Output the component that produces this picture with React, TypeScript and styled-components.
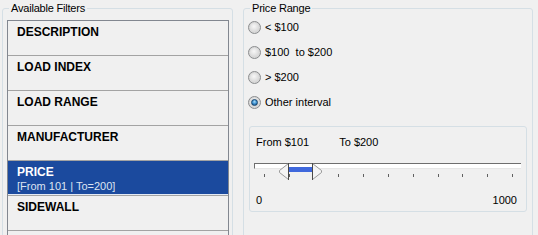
import React from 'react';
import styled, { createGlobalStyle } from 'styled-components';

const GlobalStyle = createGlobalStyle`
  html, body { margin: 0; padding: 0; background: #f0f0f0; overflow: hidden; }
  body { font-family: "Liberation Sans", Arial, sans-serif; font-size: 11px; color: #000; }
`;

const Window = styled.div`
  display: flex;
  align-items: flex-start;
  gap: 10px;
  padding: 2px 0 0 2px;
  width: 538px;
  height: 235px;
  box-sizing: border-box;
  overflow: hidden;
`;

const GroupBox = styled.fieldset<{ $width: number; $padRight: number }>`
  margin: 0;
  padding: 0 ${(p) => p.$padRight}px 0 4px;
  width: ${(p) => p.$width}px;
  min-width: 0;
  height: 280px;
  box-sizing: border-box;
  border: 1px solid #d5dfe5;
  border-radius: 3px;
  flex: none;
`;

const Legend = styled.legend`
  margin-left: 2px;
  padding: 0 2px;
  font-size: 11px;
  line-height: 13px;
  letter-spacing: -0.2px;
`;

const ListBox = styled.div`
  margin-top: 5px;
  border: 1px solid #828790;
  background: #f0f0f0;
  height: 260px;
`;

const Item = styled.div<{ $selected?: boolean }>`
  height: 35px;
  box-sizing: border-box;
  padding: 4px 0 0 9px;
  border-bottom: 1px solid #a3a3a3;
  background: ${(p) => (p.$selected ? '#1b4a9e' : 'transparent')};
  color: ${(p) => (p.$selected ? '#ffffff' : '#000000')};
  box-shadow: ${(p) => (p.$selected ? 'inset 0 -1px 0 #e4eaf4' : 'none')};
`;

const ItemTitle = styled.div`
  font-weight: bold;
  font-size: 12px;
  line-height: 14px;
`;

const ItemSub = styled.div`
  font-size: 11px;
  line-height: 13px;
  margin-top: 1px;
  color: #dbe3f1;
`;

const RadioRow = styled.label`
  display: flex;
  align-items: center;
  gap: 4px;
  height: 25px;
  line-height: 13px;
  white-space: pre;
`;

const RadioCircle = styled.span<{ $checked: boolean }>`
  width: 13px;
  height: 13px;
  box-sizing: border-box;
  border-radius: 50%;
  border: 1px solid #8a8c8e;
  background: radial-gradient(circle at 45% 40%, #f7f7f7 0%, #e0e0e0 45%, #c4c4c4 100%);
  box-shadow: inset 0 0 0 1px #d9d9d9;
  display: flex;
  align-items: center;
  justify-content: center;
  flex: none;
  &::after {
    content: '';
    display: ${(p) => (p.$checked ? 'block' : 'none')};
    width: 7px;
    height: 7px;
    box-sizing: border-box;
    border-radius: 50%;
    border: 1px solid #17466f;
    background: radial-gradient(circle at 50% 35%, #a8dcf8 0%, #3b8fcf 50%, #0f3f6e 100%);
  }
`;

const SliderPanel = styled.div`
  margin: 11px 1px 0 1px;
  border: 1px solid #d5dfe5;
  border-radius: 3px;
  padding: 9px 5px 4px 4px;
`;

const ValueRow = styled.div`
  display: flex;
  gap: 30px;
  padding-left: 2px;
  line-height: 13px;
`;

const Slider = styled.div`
  position: relative;
  margin-top: 14px;
  height: 17px;
`;

const Track = styled.div`
  margin-top: 4px;
  height: 4px;
  border-top: 1px solid #6e6e6e;
  border-left: 1px solid #6e6e6e;
  border-bottom: 1px solid #e6e6e6;
  background: #ffffff;
  box-sizing: content-box;
`;

const RangeFill = styled.div`
  position: absolute;
  top: 4px;
  height: 5px;
  background: #3f68dc;
`;

const Ticks = styled.div`
  display: flex;
  justify-content: space-between;
  padding: 0 8px 0 10px;
  margin-top: 5px;
`;

const Tick = styled.span`
  width: 1px;
  height: 3px;
  background: #5f5f5f;
`;

const Thumb = styled.svg`
  position: absolute;
  top: 0;
  width: 10px;
  height: 17px;
  overflow: visible;
`;

const ScaleRow = styled.div`
  display: flex;
  justify-content: space-between;
  margin-top: 14px;
  padding: 0 4px 0 2px;
  line-height: 13px;
`;

const filters = [
  { name: 'DESCRIPTION' },
  { name: 'LOAD INDEX' },
  { name: 'LOAD RANGE' },
  { name: 'MANUFACTURER' },
  { name: 'PRICE', sub: '[From 101 | To=200]', selected: true },
  { name: 'SIDEWALL' },
];

const options = ['< $100', '$100  to $200', '> $200', 'Other interval'];

const MIN = 0;
const MAX = 1000;
const FROM = 101;
const TO = 200;
const pos = (v: number) => 10 + ((v - MIN) / (MAX - MIN)) * 248;

function LeftThumb({ left }: { left: number }) {
  return (
    <Thumb viewBox="0 0 10 17" style={{ left }}>
      <polygon points="9.5,0.5 0.5,7.5 0.5,9.5 9.5,16.5" fill="#f4f4f4" stroke="#9a9a9a" strokeWidth="1" />
      <line x1="9.5" y1="0" x2="9.5" y2="17" stroke="#4a4a4a" strokeWidth="1" />
    </Thumb>
  );
}

function RightThumb({ left }: { left: number }) {
  return (
    <Thumb viewBox="0 0 10 17" style={{ left }}>
      <polygon points="0.5,0.5 9.5,7.5 9.5,9.5 0.5,16.5" fill="#f4f4f4" stroke="#9a9a9a" strokeWidth="1" />
      <line x1="0.5" y1="0" x2="0.5" y2="17" stroke="#4a4a4a" strokeWidth="1" />
    </Thumb>
  );
}

export default function App() {
  const start = Math.round(pos(FROM));
  const end = Math.floor(pos(TO)) - 1;
  return (
    <>
      <GlobalStyle />
      <Window>
        <GroupBox $width={231} $padRight={3}>
          <Legend>Available Filters</Legend>
          <ListBox>
            {filters.map((f) => (
              <Item key={f.name} $selected={f.selected}>
                <ItemTitle>{f.name}</ItemTitle>
                {f.sub && <ItemSub>{f.sub}</ItemSub>}
              </Item>
            ))}
          </ListBox>
        </GroupBox>
        <GroupBox $width={290} $padRight={4}>
          <Legend>Price Range</Legend>
          {options.map((o, i) => (
            <RadioRow key={o}>
              <RadioCircle $checked={i === 3} />
              {o}
            </RadioRow>
          ))}
          <SliderPanel>
            <ValueRow>
              <span>From ${FROM}</span>
              <span>To ${TO}</span>
            </ValueRow>
            <Slider>
              <Track />
              <Ticks>
                {Array.from({ length: 11 }).map((_, i) => (
                  <Tick key={i} />
                ))}
              </Ticks>
              <RangeFill style={{ left: start, width: end - start + 1 }} />
              <LeftThumb left={start - 10} />
              <RightThumb left={end} />
            </Slider>
            <ScaleRow>
              <span>{MIN}</span>
              <span>{MAX}</span>
            </ScaleRow>
          </SliderPanel>
        </GroupBox>
      </Window>
    </>
  );
}
